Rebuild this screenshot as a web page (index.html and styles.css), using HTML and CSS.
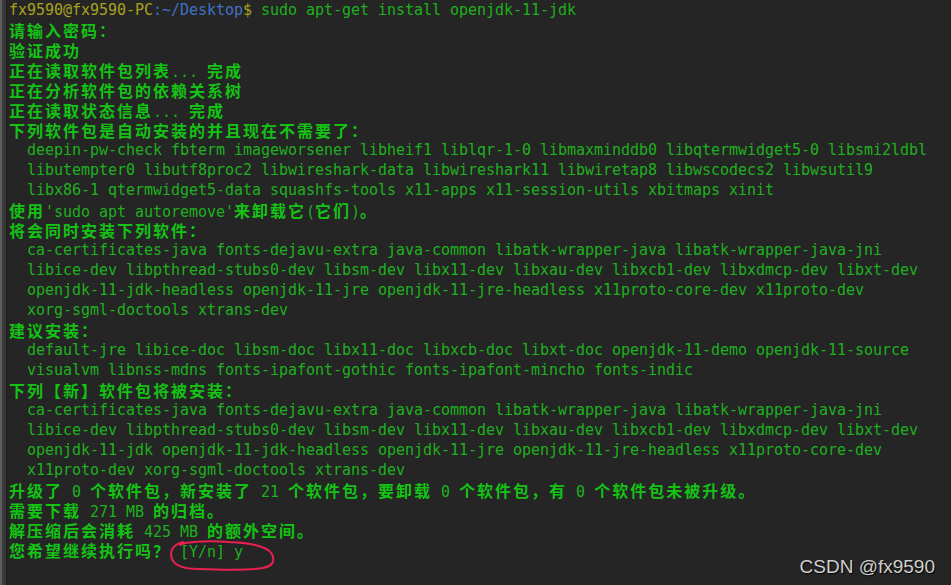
FILE: index.html
```html
<!DOCTYPE HTML>
<html>
<head>
<title>Terminal</title>
<link rel="stylesheet" href="styles.css">
</head>
<body>
<div class="window">
  <div class="edge"></div>
  <div class="term">
<div class="line"><span class="user">fx9590@fx9590-PC</span><span class="path">:~/Desktop</span><span class="user">$</span> sudo apt-get install openjdk-11-jdk</div>
<div class="line"><span class="w">请输入密码：</span></div>
<div class="line"><span class="w">验证成功</span></div>
<div class="line"><span class="w">正在读取软件包列表</span>... <span class="w">完成</span></div>
<div class="line"><span class="w">正在分析软件包的依赖关系树</span></div>
<div class="line"><span class="w">正在读取状态信息</span>... <span class="w">完成</span></div>
<div class="line"><span class="w">下列软件包是自动安装的并且现在不需要了：</span></div>
<div class="line">  deepin-pw-check fbterm imageworsener libheif1 liblqr-1-0 libmaxminddb0 libqtermwidget5-0 libsmi2ldbl</div>
<div class="line">  libutempter0 libutf8proc2 libwireshark-data libwireshark11 libwiretap8 libwscodecs2 libwsutil9</div>
<div class="line">  libx86-1 qtermwidget5-data squashfs-tools x11-apps x11-session-utils xbitmaps xinit</div>
<div class="line"><span class="w">使用</span>'sudo apt autoremove'<span class="w">来卸载它</span>(<span class="w">它们</span>)<span class="w">。</span></div>
<div class="line"><span class="w">将会同时安装下列软件：</span></div>
<div class="line">  ca-certificates-java fonts-dejavu-extra java-common libatk-wrapper-java libatk-wrapper-java-jni</div>
<div class="line">  libice-dev libpthread-stubs0-dev libsm-dev libx11-dev libxau-dev libxcb1-dev libxdmcp-dev libxt-dev</div>
<div class="line">  openjdk-11-jdk-headless openjdk-11-jre openjdk-11-jre-headless x11proto-core-dev x11proto-dev</div>
<div class="line">  xorg-sgml-doctools xtrans-dev</div>
<div class="line"><span class="w">建议安装：</span></div>
<div class="line">  default-jre libice-doc libsm-doc libx11-doc libxcb-doc libxt-doc openjdk-11-demo openjdk-11-source</div>
<div class="line">  visualvm libnss-mdns fonts-ipafont-gothic fonts-ipafont-mincho fonts-indic</div>
<div class="line"><span class="w">下列【新】软件包将被安装：</span></div>
<div class="line">  ca-certificates-java fonts-dejavu-extra java-common libatk-wrapper-java libatk-wrapper-java-jni</div>
<div class="line">  libice-dev libpthread-stubs0-dev libsm-dev libx11-dev libxau-dev libxcb1-dev libxdmcp-dev libxt-dev</div>
<div class="line">  openjdk-11-jdk openjdk-11-jdk-headless openjdk-11-jre openjdk-11-jre-headless x11proto-core-dev</div>
<div class="line">  x11proto-dev xorg-sgml-doctools xtrans-dev</div>
<div class="line"><span class="w">升级了</span> 0 <span class="w">个软件包，新安装了</span> 21 <span class="w">个软件包，要卸载</span> 0 <span class="w">个软件包，有</span> 0 <span class="w">个软件包未被升级。</span></div>
<div class="line"><span class="w">需要下载</span> 271 MB <span class="w">的归档。</span></div>
<div class="line"><span class="w">解压缩后会消耗</span> 425 MB <span class="w">的额外空间。</span></div>
<div class="line"><span class="w">您希望继续执行吗？</span> [Y/n] y</div>
  </div>
</div>

<svg class="circle" width="110" height="36" viewBox="0 0 110 36">
  <path d="M14 5 C 9 6, 2 10, 2 17 C 2 27, 12 32, 30 32 C 55 33, 82 33, 94 31 C 104 29, 106 24, 103 17 C 99 10, 85 6, 60 5 C 45 4, 30 4, 16 6 L 11 8" fill="none" stroke="#e8214f" stroke-width="2" stroke-linecap="round"/>
</svg>

<div class="mark">CSDN @fx9590</div>
</body>
</html>
```

FILE: styles.css
```css
html, body {
  margin: 0;
  height: 100%;
  background: #252525;
  overflow: hidden;
}

.window {
  display: flex;
  height: 100%;
}

.edge {
  width: 7px;
  flex: none;
  background: linear-gradient(to right, #5e5e5e 0, #5e5e5e 2px, #383838 2px, #383838 6px, #1c1c1c 6px);
}

.term {
  padding: 0 0 0 2px;
  font-family: "DejaVu Sans Mono", "Liberation Mono", monospace;
  font-size: 15px;
  letter-spacing: -0.03px;
  color: #1eb01e;
}

.line {
  height: 20px;
  line-height: 20px;
  white-space: pre;
}

.w {
  font-family: "Noto Sans CJK SC", sans-serif;
  font-size: 16px;
  font-weight: bold;
  letter-spacing: 2px;
  color: #14c214;
}

.user {
  color: #a7a21e;
}

.path {
  color: #3f72c2;
}

.circle {
  position: absolute;
  left: 169px;
  top: 537px;
}

.mark {
  position: absolute;
  right: 16px;
  bottom: 7px;
  font-family: "Liberation Sans", Arial, sans-serif;
  font-size: 19px;
  color: #cfcfcf;
  text-shadow: 1px 1px 1px #000;
}
```
